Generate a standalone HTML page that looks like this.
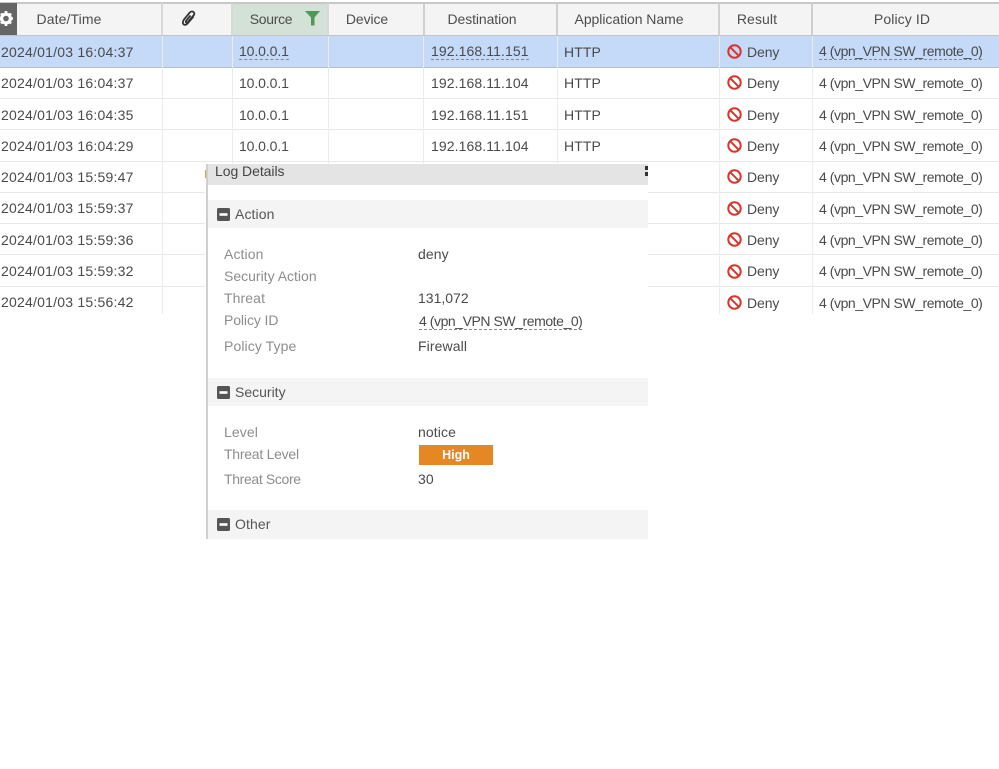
<!DOCTYPE html>
<html><head><meta charset="utf-8"><style>
html,body{margin:0;padding:0;background:#fff}
#p{position:relative;width:999px;height:769px;overflow:hidden;background:#fff;font-family:"Liberation Sans",sans-serif;font-size:14px;color:#4a4a4a}
#p div,#p span.t,#p svg{position:absolute}
.t{white-space:nowrap;line-height:18px;letter-spacing:.1px}
.h{top:10px;color:#4d4d4d;transform:translateX(-50%)}
.d{border-bottom:1px dashed #888;line-height:15px}
.l{color:#8d8d8d;left:224px}
.v{left:418px}
.s{left:235px;color:#555}
.y{letter-spacing:.22px}
.n{letter-spacing:-.1px}
.i{letter-spacing:.1px}
.q{letter-spacing:-.44px}
</style></head><body><div id="p">
<div style="left:0;top:2px;width:999px;height:33px;background:#f4f4f4;border-top:2px solid #c8c8c8;box-sizing:border-box"></div>
<div style="left:232px;top:4px;width:96px;height:31px;background:#d3e1d6"></div>
<div style="left:0;top:35px;width:999px;height:1px;background:#c4c4c4"></div>
<div style="left:0;top:36px;width:999px;height:32px;background:#c5d9f8;border-bottom:1px solid #aebfd8;box-sizing:border-box"></div>
<div style="left:0;top:3px;width:17px;height:32px;background:#666"></div>

<div style="left:0;top:98px;width:999px;height:1px;background:#e8e8e8"></div>
<div style="left:0;top:129px;width:999px;height:1px;background:#e8e8e8"></div>
<div style="left:0;top:161px;width:999px;height:1px;background:#e8e8e8"></div>
<div style="left:0;top:192px;width:999px;height:1px;background:#e8e8e8"></div>
<div style="left:0;top:223px;width:999px;height:1px;background:#e8e8e8"></div>
<div style="left:0;top:254px;width:999px;height:1px;background:#e8e8e8"></div>
<div style="left:0;top:286px;width:999px;height:1px;background:#e8e8e8"></div>

<div style="left:161px;top:3px;width:2px;height:32px;background:#d8d8d8"></div>
<div style="left:231px;top:3px;width:2px;height:32px;background:#d8d8d8"></div>
<div style="left:327px;top:3px;width:2px;height:32px;background:#d8d8d8"></div>
<div style="left:423px;top:3px;width:2px;height:32px;background:#d0d0d0"></div>
<div style="left:556px;top:3px;width:2px;height:32px;background:#d0d0d0"></div>
<div style="left:718px;top:3px;width:2px;height:32px;background:#d0d0d0"></div>
<div style="left:811px;top:3px;width:2px;height:32px;background:#d0d0d0"></div>

<div style="left:162px;top:36px;width:1px;height:278px;background:#ececec"></div>
<div style="left:232px;top:36px;width:1px;height:278px;background:#ececec"></div>
<div style="left:328px;top:36px;width:1px;height:278px;background:#ececec"></div>
<div style="left:423px;top:36px;width:1px;height:278px;background:#ececec"></div>
<div style="left:557px;top:36px;width:1px;height:278px;background:#ececec"></div>
<div style="left:719px;top:36px;width:1px;height:278px;background:#ececec"></div>
<div style="left:812px;top:36px;width:1px;height:278px;background:#ececec"></div>
<div style="left:0;top:314px;width:999px;height:460px;background:#fff"></div>

<svg style="left:-2px;top:10px" width="16" height="17" viewBox="0 0 16 17"><circle cx="8" cy="8.500" r="4.400" fill="none" stroke="#fff" stroke-width="3.200"/><path d="M8 1v3M8 13v3M1 8.500h3M12 8.500h3M3 3.500l2 2M11 11.500l2 2M13 3.500l-2 2M5 11.500l-2 2" stroke="#fff" stroke-width="2.600"/></svg>
<svg style="left:181px;top:10px" width="15" height="17" viewBox="0 0 15 17"><path d="M12.500 6.500L6.500 13.500C5 15.500 2.500 15 2 13.500C1.500 12 2 11 3 9.500L8.500 2.800C9.800 1.200 11.500 1.200 12.500 2C13.500 3 13.500 4.300 12.500 5.500L7 12C6.200 13 5.300 12.800 5 12.300C4.700 11.800 4.900 11 5.500 10.300L9.500 5.500" fill="none" stroke="#333" stroke-width="1.800"/></svg>
<svg style="left:305px;top:11px" width="16" height="15" viewBox="0 0 16 15"><path d="M0 0H15L9.500 6.500V14.500L6 14.500V6.500Z" fill="#4d9a58"/></svg>

<span class="t h" style="left:69px">Date/Time</span>
<span class="t h" style="left:271px;letter-spacing:-.3px">Source</span>
<span class="t h" style="left:367px;letter-spacing:-.1px">Device</span>
<span class="t h" style="left:482px;letter-spacing:-.1px">Destination</span>
<span class="t h" style="left:629px;letter-spacing:-.05px">Application Name</span>
<span class="t h" style="left:757px">Result</span>
<span class="t h" style="left:902px">Policy ID</span>

<span class="t y" style="left:1px;top:43px">2024/01/03 16:04:37</span>
<span class="t y" style="left:1px;top:74px">2024/01/03 16:04:37</span>
<span class="t y" style="left:1px;top:106px">2024/01/03 16:04:35</span>
<span class="t y" style="left:1px;top:137px">2024/01/03 16:04:29</span>
<span class="t y" style="left:1px;top:168px">2024/01/03 15:59:47</span>
<span class="t y" style="left:1px;top:199px">2024/01/03 15:59:37</span>
<span class="t y" style="left:1px;top:231px">2024/01/03 15:59:36</span>
<span class="t y" style="left:1px;top:262px">2024/01/03 15:59:32</span>
<span class="t y" style="left:1px;top:293px">2024/01/03 15:56:42</span>

<span class="t d n" style="left:239px;top:44px">10.0.0.1</span>
<span class="t n" style="left:239px;top:74px">10.0.0.1</span>
<span class="t n" style="left:239px;top:106px">10.0.0.1</span>
<span class="t n" style="left:239px;top:137px">10.0.0.1</span>

<span class="t d i" style="left:431px;top:44px">192.168.11.151</span>
<span class="t i" style="left:431px;top:74px">192.168.11.104</span>
<span class="t i" style="left:431px;top:106px">192.168.11.151</span>
<span class="t i" style="left:431px;top:137px">192.168.11.104</span>

<span class="t" style="left:564px;top:43px">HTTP</span>
<span class="t" style="left:564px;top:74px">HTTP</span>
<span class="t" style="left:564px;top:106px">HTTP</span>
<span class="t" style="left:564px;top:137px">HTTP</span>

<svg style="left:727px;top:44px" width="15" height="15" viewBox="0 0 15 15"><circle cx="7.500" cy="7.500" r="6.200" fill="none" stroke="#d9362b" stroke-width="2"/><path d="M3.200 3.200L11.800 11.800" stroke="#d9362b" stroke-width="2"/></svg>
<svg style="left:727px;top:75px" width="15" height="15" viewBox="0 0 15 15"><circle cx="7.500" cy="7.500" r="6.200" fill="none" stroke="#d9362b" stroke-width="2"/><path d="M3.200 3.200L11.800 11.800" stroke="#d9362b" stroke-width="2"/></svg>
<svg style="left:727px;top:107px" width="15" height="15" viewBox="0 0 15 15"><circle cx="7.500" cy="7.500" r="6.200" fill="none" stroke="#d9362b" stroke-width="2"/><path d="M3.200 3.200L11.800 11.800" stroke="#d9362b" stroke-width="2"/></svg>
<svg style="left:727px;top:138px" width="15" height="15" viewBox="0 0 15 15"><circle cx="7.500" cy="7.500" r="6.200" fill="none" stroke="#d9362b" stroke-width="2"/><path d="M3.200 3.200L11.800 11.800" stroke="#d9362b" stroke-width="2"/></svg>
<svg style="left:727px;top:169px" width="15" height="15" viewBox="0 0 15 15"><circle cx="7.500" cy="7.500" r="6.200" fill="none" stroke="#d9362b" stroke-width="2"/><path d="M3.200 3.200L11.800 11.800" stroke="#d9362b" stroke-width="2"/></svg>
<svg style="left:727px;top:201px" width="15" height="15" viewBox="0 0 15 15"><circle cx="7.500" cy="7.500" r="6.200" fill="none" stroke="#d9362b" stroke-width="2"/><path d="M3.200 3.200L11.800 11.800" stroke="#d9362b" stroke-width="2"/></svg>
<svg style="left:727px;top:232px" width="15" height="15" viewBox="0 0 15 15"><circle cx="7.500" cy="7.500" r="6.200" fill="none" stroke="#d9362b" stroke-width="2"/><path d="M3.200 3.200L11.800 11.800" stroke="#d9362b" stroke-width="2"/></svg>
<svg style="left:727px;top:264px" width="15" height="15" viewBox="0 0 15 15"><circle cx="7.500" cy="7.500" r="6.200" fill="none" stroke="#d9362b" stroke-width="2"/><path d="M3.200 3.200L11.800 11.800" stroke="#d9362b" stroke-width="2"/></svg>
<svg style="left:727px;top:295px" width="15" height="15" viewBox="0 0 15 15"><circle cx="7.500" cy="7.500" r="6.200" fill="none" stroke="#d9362b" stroke-width="2"/><path d="M3.200 3.200L11.800 11.800" stroke="#d9362b" stroke-width="2"/></svg>

<span class="t n" style="left:747px;top:43px">Deny</span>
<span class="t n" style="left:747px;top:74px">Deny</span>
<span class="t n" style="left:747px;top:106px">Deny</span>
<span class="t n" style="left:747px;top:137px">Deny</span>
<span class="t n" style="left:747px;top:168px">Deny</span>
<span class="t n" style="left:747px;top:200px">Deny</span>
<span class="t n" style="left:747px;top:231px">Deny</span>
<span class="t n" style="left:747px;top:262px">Deny</span>
<span class="t n" style="left:747px;top:294px">Deny</span>

<span class="t d q" style="left:819px;top:44px">4 (vpn_VPN SW_remote_0)</span>
<span class="t q" style="left:819px;top:74px">4 (vpn_VPN SW_remote_0)</span>
<span class="t q" style="left:819px;top:106px">4 (vpn_VPN SW_remote_0)</span>
<span class="t q" style="left:819px;top:137px">4 (vpn_VPN SW_remote_0)</span>
<span class="t q" style="left:819px;top:168px">4 (vpn_VPN SW_remote_0)</span>
<span class="t q" style="left:819px;top:200px">4 (vpn_VPN SW_remote_0)</span>
<span class="t q" style="left:819px;top:231px">4 (vpn_VPN SW_remote_0)</span>
<span class="t q" style="left:819px;top:262px">4 (vpn_VPN SW_remote_0)</span>
<span class="t q" style="left:819px;top:294px">4 (vpn_VPN SW_remote_0)</span>

<div style="left:205px;top:164px;width:443px;height:375px;background:#fff"></div>
<div style="left:205px;top:170px;width:1px;height:8px;background:#e09a50"></div>
<div style="left:206px;top:164px;width:2px;height:375px;background:#cfcfcf"></div>
<div style="left:208px;top:164px;width:440px;height:21px;background:#e4e4e4"></div>
<div style="left:208px;top:200px;width:440px;height:28px;background:#f4f4f4"></div>
<div style="left:208px;top:378px;width:440px;height:28px;background:#f4f4f4"></div>
<div style="left:208px;top:510px;width:440px;height:29px;background:#f4f4f4"></div>
<div style="left:645px;top:166px;width:3px;height:4px;background:#333"></div>
<div style="left:645px;top:172px;width:3px;height:4px;background:#333"></div>

<span class="t" style="left:215px;top:162px;color:#444;letter-spacing:-.05px">Log Details</span>

<svg style="left:217px;top:208px" width="13" height="13" viewBox="0 0 13 13"><rect width="13" height="13" rx="1.500" fill="#555"/><rect x="2.500" y="5.200" width="8" height="2.600" fill="#fff"/></svg>
<svg style="left:217px;top:386px" width="13" height="13" viewBox="0 0 13 13"><rect width="13" height="13" rx="1.500" fill="#555"/><rect x="2.500" y="5.200" width="8" height="2.600" fill="#fff"/></svg>
<svg style="left:217px;top:518px" width="13" height="13" viewBox="0 0 13 13"><rect width="13" height="13" rx="1.500" fill="#555"/><rect x="2.500" y="5.200" width="8" height="2.600" fill="#fff"/></svg>
<span class="t s" style="top:205px">Action</span>
<span class="t s" style="top:383px;letter-spacing:0">Security</span>
<span class="t s" style="top:515px">Other</span>

<span class="t l" style="top:245px">Action</span>
<span class="t l" style="top:267px;letter-spacing:0">Security Action</span>
<span class="t l" style="top:289px">Threat</span>
<span class="t l" style="top:311px;letter-spacing:-.1px">Policy ID</span>
<span class="t l" style="top:337px">Policy Type</span>
<span class="t l" style="top:423px">Level</span>
<span class="t l" style="top:445px;letter-spacing:-.25px">Threat Level</span>
<span class="t l" style="top:470px;letter-spacing:-.35px">Threat Score</span>

<span class="t v" style="top:245px">deny</span>
<span class="t v" style="top:289px;letter-spacing:0">131,072</span>
<span class="t v d q" style="top:314px;left:419px">4 (vpn_VPN SW_remote_0)</span>
<span class="t v" style="top:337px">Firewall</span>
<span class="t v" style="top:423px">notice</span>
<div style="left:419px;top:445px;width:74px;height:20px;background:#e58723"></div>
<span class="t" style="left:456px;top:446px;transform:translateX(-50%);color:#fff;font-weight:bold;font-size:12.500px;letter-spacing:0">High</span>
<span class="t v" style="top:470px">30</span>
</div></body></html>
